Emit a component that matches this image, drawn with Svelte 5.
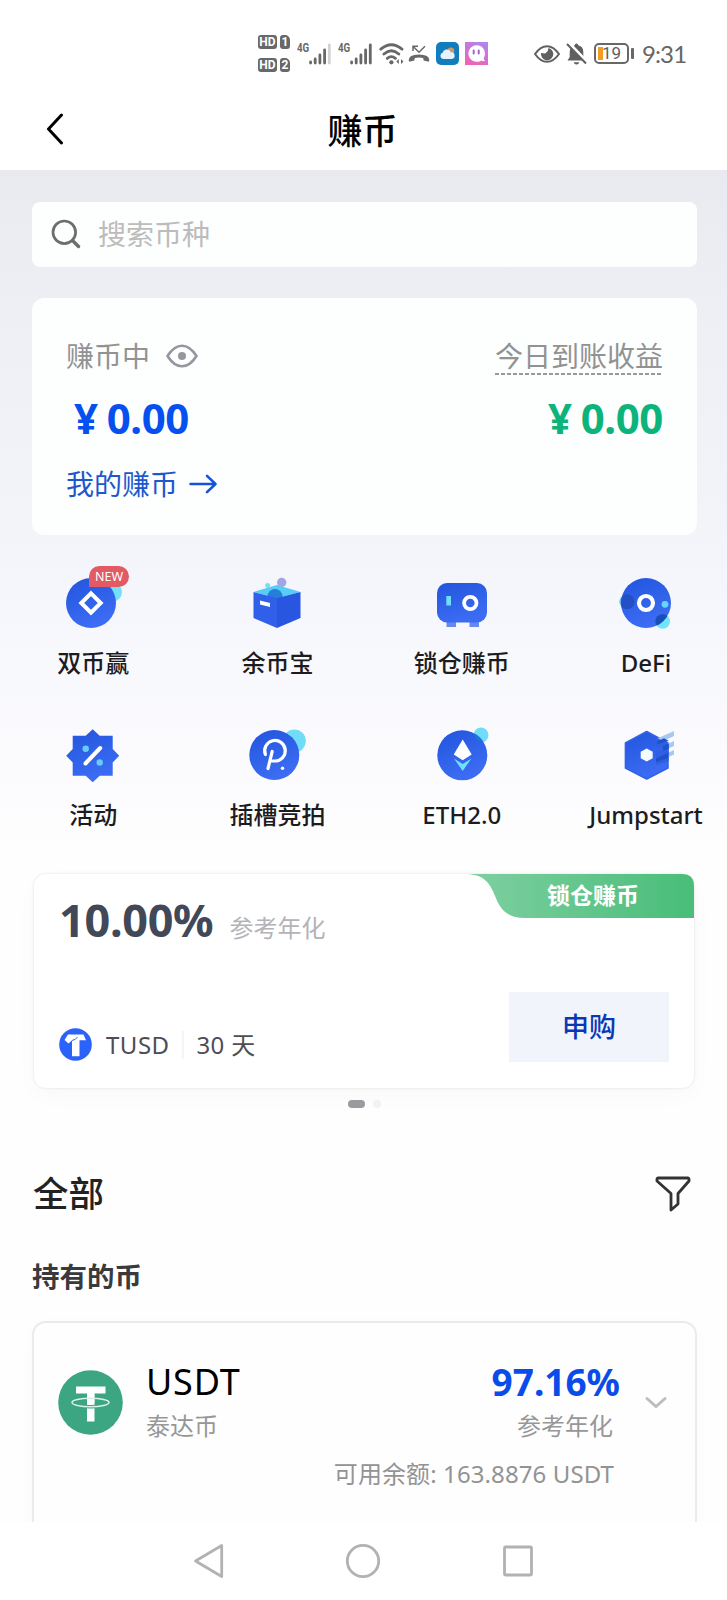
<script lang="ts">
	let keyword: string = $state('');

	const products: { name: string; icon: string; badge?: string }[] = [
		{ name: '双币赢', icon: 'dual', badge: 'NEW' },
		{ name: '余币宝', icon: 'box' },
		{ name: '锁仓赚币', icon: 'safe' },
		{ name: 'DeFi', icon: 'defi' },
		{ name: '活动', icon: 'activity' },
		{ name: '插槽竞拍', icon: 'slot' },
		{ name: 'ETH2.0', icon: 'eth' },
		{ name: 'Jumpstart', icon: 'jump' },
	];
</script>

{#snippet signal(weak: boolean)}
	<span class="net">4G</span>
	<svg class="bars" width="22" height="22" viewBox="0 0 22 22" stroke="#686868" stroke-width="2.8" stroke-linecap="round">
		<path d="M1.6 19v1M6.2 16v4M10.9 12v8M15.6 7v13" />
		<path d="M20.3 2v18" stroke={weak ? '#d2d2d2' : '#686868'} />
	</svg>
{/snippet}

{#snippet hd(n: string)}
	<span class="hd"><b>HD</b><i>{n}</i></span>
{/snippet}

<svg class="defs" width="0" height="0">
	<defs>
		<linearGradient id="blue" x1="0" y1="0" x2="0.4" y2="1">
			<stop offset="0" stop-color="#2354dd" />
			<stop offset="1" stop-color="#3b6cf3" />
		</linearGradient>
	</defs>
</svg>

<div class="app">
	<header>
		<div class="status">
			<div class="hds">
				{@render hd('1')}
				{@render hd('2')}
			</div>
			{@render signal(true)}
			{@render signal(false)}
			<svg class="wifi" width="26" height="22" viewBox="0 0 26 22" fill="none" stroke="#686868" stroke-width="2.8" stroke-linecap="round">
				<path d="M1.8 6.2Q12.4-2.6 23 6.2M4.9 11Q12.4 4.6 19.8 11M8.3 15.3Q12.4 12 16.4 15.3" />
				<circle cx="12.4" cy="19.3" r="2.1" fill="#686868" stroke="none" />
				<path d="M19.800 16v5l-2.500-2.500zM22 16v5l2.500-2.500z" fill="#686868" stroke="none" />
			</svg>
			<svg class="call" width="22" height="18" viewBox="0 0 22 18" fill="none" stroke="#686868">
				<path d="M5 6V1.2h5M5 1.2l6 6 6-6" stroke-width="1.5" />
				<path d="M.7 15.6Q.4 9.6 11 9.6t10.3 6q-.2 1.4-1.6 1l-4-1.2-.6-2.3q-4.1-1-8.2 0l-.6 2.3-4 1.2q-1.4.4-1.6-1z" fill="#686868" stroke="none" />
			</svg>
			<svg class="weather" width="23" height="23" viewBox="0 0 23 23">
				<rect width="23" height="23" rx="5" fill="#127dbd" />
				<circle cx="14.8" cy="9" r="3.5" fill="#c69a72" />
				<path d="M7 17a3.3 3.3 0 0 1-.2-6.4 4.2 4.2 0 0 1 8-.2 3.3 3.3 0 0 1 1 6.600z" fill="#e4f3fc" />
			</svg>
			<svg class="chat" width="23" height="23" viewBox="0 0 23 23">
				<defs>
					<linearGradient id="pink" x1="0.7" y1="0" x2="0.3" y2="1">
						<stop offset="0" stop-color="#b184f0" />
						<stop offset="1" stop-color="#f063b4" />
					</linearGradient>
				</defs>
				<rect width="23" height="23" fill="url(#pink)" />
				<path d="M11.5 3.200a8.300 8.300 0 1 0 4.800 15.200q2 1.400 3.800.300-1.700-1-1.300-3A8.300 8.300 0 0 0 11.500 3.200z" fill="#fff" />
				<path d="M8.700 8.500v3M13.700 8.500v3" stroke="#a263d6" stroke-width="2" stroke-linecap="round" />
			</svg>
			<svg class="watch" width="26" height="18" viewBox="0 0 26 18">
				<path d="M1 9Q6.5 1.2 13 1.2T25 9q-5.500 7.800-12 7.800T1 9z" fill="none" stroke="#606060" stroke-width="2" />
				<path d="M14.500 3a6.200 6.200 0 1 1-7.500 5l4 .500q3-1.500 3.500-5.500z" fill="#606060" />
			</svg>
			<svg class="bell" width="21" height="22" viewBox="0 0 21 22">
				<path d="M10.500.5q1.600 0 1.800 1.700 5 1.300 5 6.800v5l2.200 3.500H1.500L3.700 14V9q0-5.500 5-6.800.2-1.700 1.800-1.700zM7.700 19.200h5.600q-.6 2.300-2.800 2.300t-2.800-2.300z" fill="#606060" />
				<path d="M3.500.5l17 18" stroke="#fff" stroke-width="3" />
				<path d="M1 1l19 19.500" stroke="#606060" stroke-width="2" />
			</svg>
			<div class="battery"><span>19</span></div>
			<span class="time">9:31</span>
		</div>
		<div class="title">
			<svg width="18" height="32" viewBox="0 0 18 32" fill="none" stroke="#000" stroke-width="3" stroke-linecap="round" stroke-linejoin="round">
				<path d="M15.500 2L2.500 16l13 14" />
			</svg>
			<h1>赚币</h1>
		</div>
	</header>

	<main>
		<label class="search">
			<svg width="30" height="30" viewBox="0 0 30 30" fill="none" stroke="#6d6d70" stroke-width="2.700" stroke-linecap="round">
				<circle cx="13.300" cy="13.300" r="11.300" />
				<path d="M21.500 21.500l6 6" stroke-width="3.400" />
			</svg>
			<input placeholder="搜索币种" bind:value={keyword} />
		</label>

		<section class="summary">
			<div class="row">
				<span class="caption">赚币中
					<svg width="32" height="24" viewBox="0 0 32 24">
						<path d="M1.500 12Q8 1.700 16 1.700T30.500 12Q24 22.300 16 22.300T1.500 12z" fill="none" stroke="#9696a0" stroke-width="2.600" />
						<circle cx="16" cy="12" r="4" fill="#9696a0" />
					</svg>
				</span>
				<span class="caption dashed">今日到账收益</span>
			</div>
			<div class="row amounts">
				<strong class="earning">¥ 0.00</strong>
				<strong class="today">¥ 0.00</strong>
			</div>
			<a class="mine" href="#earn">我的赚币
				<svg width="28" height="20" viewBox="0 0 28 20" fill="none" stroke="#1552dc" stroke-width="2.500" stroke-linecap="round" stroke-linejoin="round">
					<path d="M1.500 10h25M18 1.800l8.500 8.200-8.500 8.200" />
				</svg>
			</a>
		</section>

		<nav class="products">
			{#each products as item}
				<div class="product">
					<div class="icon">
						<svg width="72" height="72" viewBox="0 0 72 72">
							{#if item.icon === 'dual'}
								<circle cx="55" cy="25" r="10" fill="#74e0f8" />
								<circle cx="34" cy="36" r="25" fill="url(#blue)" />
								<path d="M34 26.300l9.700 9.700-9.700 9.700-9.700-9.700z" fill="none" stroke="#fff" stroke-width="4" />
							{:else if item.icon === 'box'}
								<circle cx="40.700" cy="15.500" r="4.700" fill="#a5a5e6" />
								<circle cx="26.700" cy="18.500" r="2.500" fill="#74e0f0" />
								<path d="M12.500 25L36 18l23.500 7L36 31z" fill="#55cdf6" />
								<circle cx="34" cy="29.500" r="7.500" fill="#257fd9" />
								<path d="M12.500 25L36 31v30L12.500 51z" fill="#305fe9" />
								<path d="M59.500 25L36 31v30l23.500-10z" fill="#2856e0" />
								<path d="M19 33.500l10 2.500v4l-10-2.500z" fill="#fff" />
							{:else if item.icon === 'safe'}
								<path d="M20.500 53h9.500v7h-9.500zM43.500 53h9.500v7h-9.500z" fill="#6689ef" />
								<rect x="11" y="16" width="50" height="39.500" rx="10" fill="url(#blue)" />
								<rect x="20.300" y="29" width="4.700" height="9.500" fill="#70ddfa" />
								<circle cx="44.300" cy="36" r="6.200" fill="none" stroke="#fff" stroke-width="3.800" />
							{:else if item.icon === 'defi'}
								<circle cx="15.300" cy="34.700" r="6" fill="#65b9ec" />
								<circle cx="52.700" cy="54.500" r="7.300" fill="#70e5fa" />
								<circle cx="36" cy="36" r="25" fill="url(#blue)" />
								<clipPath id="disc"><circle cx="36" cy="36" r="25" /></clipPath>
								<g clip-path="url(#disc)">
									<circle cx="17" cy="34.700" r="7.500" fill="#2350c4" />
									<circle cx="52.700" cy="54.500" r="7.300" fill="#1850b8" />
								</g>
								<circle cx="36" cy="36" r="7" fill="none" stroke="#fff" stroke-width="4.200" />
								<circle cx="55" cy="37.300" r="3.400" fill="#65d6fa" />
							{:else if item.icon === 'activity'}
								<path d="M35.700 10.200l7 6.500h13v13.300l6.500 6.700-6.500 6.800v13.200h-13l-7 6.500-7-6.500h-13V43.500l-6.500-6.800 6.500-6.700V16.700h13z" fill="url(#blue)" />
								<circle cx="28.700" cy="29.700" r="3.200" fill="#68ccf8" />
								<circle cx="42.700" cy="43.500" r="3.200" fill="#68ccf8" />
								<path d="M28.500 44.500L43.200 29" stroke="#fff" stroke-width="4" stroke-linecap="round" />
							{:else if item.icon === 'slot'}
								<circle cx="53.300" cy="22" r="11.500" fill="#70dcf8" />
								<circle cx="33.300" cy="36" r="25" fill="url(#blue)" />
								<g fill="none" stroke="#fff" stroke-width="3.200" stroke-linecap="round">
									<path d="M24.400 35.500A10.300 10.300 0 1 1 33.500 42h-4" />
									<path d="M31.200 32.500L27 49.500" />
								</g>
								<circle cx="41.500" cy="49.300" r="1.700" fill="#fff" />
							{:else if item.icon === 'eth'}
								<circle cx="55" cy="16" r="7.500" fill="#70dcf8" />
								<circle cx="36.300" cy="36.300" r="25" fill="url(#blue)" />
								<path d="M48.500 14.500a25 25 0 0 1 8.500 8A7.500 7.500 0 0 1 48.500 14.500z" fill="#177bcf" />
								<path d="M36.700 20.500l9 15-9 5.800-9-5.800z" fill="#fff" />
								<path d="M28 39.500l8.700 5.500 8.700-5.500-8.700 12.500z" fill="#70e0fa" />
							{:else}
								<path d="M36.700 12.500l21.300 11.500v25L36.700 60 15.400 49V24z" fill="url(#blue)" stroke="#3163e8" stroke-width="1.500" stroke-linejoin="round" />
								<path d="M47 19.500l17-7.500v5l-17 8zM53 27l11-5v5l-11 5zM46 39.500L64 31v4.500l-18 8.500z" fill="#a7c8f2" />
								<path d="M46 18.300l12.700 6.900V35L46 40zM46 44l12.700-6v4L46 46zM47 25.500l-1 6.500 7-1z" fill="#2e60e7" />
								<path d="M47 22.500l7-3.200 4.700 2.400L47 25.500zM53 27l5.700-2.600v5L53 32zM46 39.500l12.700-6v5L46 44z" fill="#1f51c8" />
								<path d="M36.700 29.500l6 3.300v6.500l-6 3.300-6-3.300v-6.500z" fill="#f4fbff" />
							{/if}
						</svg>
						{#if item.badge}
							<span class="badge">{item.badge}</span>
						{/if}
					</div>
					<p>{item.name}</p>
				</div>
			{/each}
		</nav>

		<section class="banner">
			<div class="tag">
				<svg width="229" height="44" viewBox="0 0 229 44">
					<defs>
						<linearGradient id="green">
							<stop offset="0" stop-color="#7fd0a1" />
							<stop offset="1" stop-color="#49bd79" />
						</linearGradient>
					</defs>
					<path d="M0 0h217q12 0 12 12v32H60C42 44 35 35 30 22S19 0 0 0z" fill="url(#green)" />
				</svg>
				<span>锁仓赚币</span>
			</div>
			<div class="rate">
				<strong>10.00%</strong>
				<span>参考年化</span>
			</div>
			<div class="offer">
				<svg width="33" height="33" viewBox="0 0 33 33">
					<circle cx="16.500" cy="16.500" r="16.300" fill="#2a62fa" />
					<path d="M9 6.500h15.500l2.500 5.700h-6.500v16h-7.500V12.200L9.500 15.500 5.500 12z" fill="#fff" />
					<path d="M13 12.500q3.500-.5 5.500-3.500" fill="none" stroke="#2a62fa" stroke-width="1" />
				</svg>
				<span class="coin">TUSD</span>
				<span class="term">30 天</span>
				<button>申购</button>
			</div>
		</section>
		<div class="dots"><i class="on"></i><i></i></div>

		<div class="all">
			<h2>全部</h2>
			<svg width="36" height="36" viewBox="0 0 36 36" fill="none" stroke="#333" stroke-width="2.800" stroke-linejoin="round">
				<path d="M3 2h30q1.300 0 1 3L23 17.500v10.500l-7 6V17.500L2 5Q1.700 2 3 2z" />
			</svg>
		</div>
		<h3>持有的币</h3>

		<section class="holding">
			<div class="asset">
				<svg class="logo" width="65" height="65" viewBox="0 0 65 65">
					<circle cx="32.500" cy="32.500" r="32.300" fill="#3ca581" />
					<path d="M18 16.500h29.500v7H36.500v28h-7.500v-28H18z" fill="#fff" />
					<ellipse cx="32.500" cy="32.500" rx="18.500" ry="4.200" fill="none" stroke="#3ca581" stroke-width="3.500" />
					<path d="M29 25h7.500v7H29z" fill="#fff" />
					<ellipse cx="32.500" cy="32.500" rx="18.500" ry="4.200" fill="none" stroke="#d9f2e9" stroke-width="1.500" />
				</svg>
				<div class="who">
					<b>USDT</b>
					<span>泰达币</span>
				</div>
				<div class="apy">
					<b>97.16%</b>
					<span>参考年化</span>
				</div>
				<svg class="more" width="22" height="13" viewBox="0 0 22 13" fill="none" stroke="#bdbdbd" stroke-width="3" stroke-linecap="round">
					<path d="M2 2.500l9 8 9-8" />
				</svg>
			</div>
			<p class="balance">可用余额: 163.8876 USDT</p>
		</section>
	</main>

	<footer>
		<svg width="340" height="36" viewBox="0 0 340 36" fill="none" stroke="#b2b2b2" stroke-width="2.800" stroke-linejoin="round">
			<path d="M28.700 2.500v31L2.500 18z" />
			<circle cx="170" cy="18" r="15.700" />
			<rect x="311.500" y="4" width="27" height="28" rx="1" />
		</svg>
	</footer>
</div>

<style>
	:global(body) {
		background-color: #fff;
	}

	* {
		box-sizing: border-box;
		margin: 0;
		padding: 0;
	}

	svg {
		display: block;
		flex: none;
	}

	.defs {
		position: absolute;
	}

	.app {
		background-color: #fefefe;
		display: flex;
		flex-direction: column;
		font-family: "Noto Sans", "Noto Sans CJK SC", sans-serif;
		height: 1600px;
		overflow: hidden;
		width: 727px;
	}

	header {
		background-color: #fff;
		flex: none;
		height: 170px;
	}

	/* status bar */
	.status {
		align-items: center;
		display: flex;
		height: 107px;
		padding-left: 258px;
	}

	.hds {
		display: flex;
		flex-direction: column;
		gap: 9px;
		margin-right: 7px;
	}

	.hd {
		display: flex;
		gap: 3px;
	}

	.hd b, .hd i {
		background-color: #686868;
		border-radius: 3px;
		color: #fff;
		font: bold 12px/14px Roboto, sans-serif;
		height: 14px;
		text-align: center;
		width: 19px;
	}

	.hd i {
		border-top-right-radius: 5px;
		width: 10px;
	}

	.net {
		align-self: flex-start;
		color: #686868;
		font: bold 13px/12px Roboto, sans-serif;
		margin-top: 42px;
		transform: scaleX(0.75);
		transform-origin: left;
		width: 12px;
	}

	.bars {
		margin-right: 7px;
	}

	.wifi {
		margin-right: 3px;
	}

	.call {
		margin-right: 6px;
	}

	.weather {
		margin-right: 6px;
	}

	.chat {
		margin-right: 46px;
	}

	.watch {
		margin-right: 6px;
	}

	.bell {
		margin-right: 7px;
	}

	.battery {
		background: linear-gradient(#f29b27, #f29b27) 2px 2px / 5px 13px no-repeat;
		border: 2px solid #686868;
		border-radius: 5px;
		height: 21px;
		position: relative;
		width: 35px;
	}

	.battery::after {
		background-color: #686868;
		border-radius: 1px;
		content: "";
		height: 11px;
		position: absolute;
		right: -7px;
		top: 3px;
		width: 3px;
	}

	.battery span {
		color: #606060;
		display: block;
		font: 17px/17px Roboto, sans-serif;
		padding-left: 6px;
	}

	.time {
		color: #666;
		font-family: Lato, sans-serif;
		font-size: 24px;
		letter-spacing: -0.900px;
		margin-left: 13px;
		padding-bottom: 1px;
	}

	/* title */
	.title {
		align-items: center;
		display: flex;
		height: 44px;
		padding-left: 46px;
	}

	h1 {
		flex: 1;
		font-size: 35px;
		font-weight: 500;
		line-height: 44px;
		margin-right: 66px;
		padding-top: 4px;
		text-align: center;
	}

	main {
		background: linear-gradient(#e9eaf0, #eeeff5 130px, #f2f3f9 320px, #f6f7fc 440px, #fbfbfe 590px, #fefefe 680px);
		display: flex;
		flex: none;
		flex-direction: column;
		height: 1352px;
		overflow: hidden;
		padding: 32px 30px 0 32px;
	}

	.search {
		align-items: center;
		background-color: #fdfefe;
		border-radius: 8px;
		display: flex;
		flex: none;
		gap: 17px;
		height: 65px;
		padding: 0 0 2px 19px;
	}

	.search input {
		background: none;
		border: 0;
		color: #333;
		font-family: inherit;
		font-size: 28px;
		line-height: 40px;
		outline: none;
		width: 400px;
	}

	.search input::placeholder {
		color: #bcbcbc;
	}

	/* summary card */
	.summary {
		background-color: #fdfefe;
		border-radius: 12px;
		flex: none;
		height: 237px;
		margin-top: 31px;
		padding: 39px 34px 0;
	}

	.row {
		display: flex;
		justify-content: space-between;
	}

	.caption {
		align-items: center;
		color: #929292;
		display: flex;
		font-size: 28px;
		gap: 16px;
		height: 38px;
		line-height: 38px;
	}

	.dashed {
		background: repeating-linear-gradient(90deg, #999 0 4px, transparent 4px 6px) bottom / 100% 2px no-repeat;
	}

	.amounts {
		font-size: 42px;
		line-height: 50px;
		margin-top: 18px;
		padding-left: 8px;
	}

	.amounts strong {
		letter-spacing: -0.400px;
		word-spacing: -1.500px;
	}

	.earning {
		color: #0650f0;
	}

	.today {
		color: #0cb47c;
	}

	.mine {
		align-items: center;
		color: #1e57cb;
		display: flex;
		font-size: 28px;
		gap: 11px;
		line-height: 40px;
		margin-top: 21px;
		text-decoration: none;
	}

	/* product entries */
	.products {
		display: grid;
		flex: none;
		grid-auto-rows: 152px;
		grid-template-columns: repeat(4, 184.300px);
		height: 339px;
		margin-left: -31px;
		padding-top: 32px;
		width: 738px;
	}

	.product {
		align-items: center;
		display: flex;
		flex-direction: column;
	}

	.icon {
		position: relative;
	}

	.badge {
		background-color: #e25a63;
		border-radius: 11px 11px 11px 0;
		color: #fff;
		font: 12.500px/21px "Noto Sans", sans-serif;
		height: 21px;
		left: 32px;
		position: absolute;
		text-align: center;
		top: -1px;
		width: 40px;
	}

	.product p {
		color: #1c1c1e;
		font-size: 24px;
		font-weight: 500;
		line-height: 34px;
		margin-top: 7px;
		white-space: nowrap;
	}

	/* recommended offer */
	.banner {
		background-color: #fff;
		border-radius: 12px;
		box-shadow: 0 0 3px rgba(30, 40, 60, 0.12), 0 8px 24px rgba(30, 40, 60, 0.025);
		flex: none;
		height: 214px;
		margin: 0 3px 0 2px;
		padding: 0 25px 0 25px;
		position: relative;
	}

	.tag {
		position: absolute;
		right: 0;
		top: 0;
	}

	.tag span {
		color: #fff;
		font-size: 23px;
		font-weight: bold;
		left: 82px;
		line-height: 43px;
		position: absolute;
		top: 0;
	}

	.rate {
		align-items: baseline;
		display: flex;
		gap: 16px;
		height: 95px;
		padding-top: 15px;
	}

	.rate strong {
		color: #414857;
		font-size: 45px;
		letter-spacing: -0.300px;
		line-height: 62px;
	}

	.rate span {
		color: #b3b3b8;
		font-size: 24px;
	}

	.offer {
		align-items: center;
		color: #4d4d55;
		display: flex;
		font-size: 24px;
		height: 116px;
		line-height: 34px;
	}

	.offer svg, .coin, .term {
		margin-top: 35px;
	}

	.coin {
		border-right: 2px solid #f5f5f7;
		letter-spacing: 0.500px;
		line-height: 28px;
		margin-left: 14px;
		padding-right: 12px;
	}

	.term {
		letter-spacing: 0.300px;
		margin-left: 13px;
	}

	.offer button {
		background-color: #f2f4fc;
		border: 0;
		color: #0a38b4;
		font-family: inherit;
		font-size: 27px;
		font-weight: 500;
		height: 70px;
		margin-left: auto;
		padding-bottom: 4px;
		width: 160px;
	}

	.dots {
		display: flex;
		flex: none;
		gap: 8px;
		height: 9px;
		margin: 12px 0 0 316px;
	}

	.dots i {
		background-color: #f3f3f7;
		border-radius: 4px;
		height: 8px;
		width: 8px;
	}

	.dots .on {
		background-color: #9c9ca0;
		width: 17px;
	}

	/* all coins */
	.all {
		align-items: center;
		display: flex;
		flex: none;
		height: 50px;
		justify-content: space-between;
		margin-top: 60px;
		padding-right: 6px;
	}

	h2 {
		color: #222;
		font-size: 35.500px;
		font-weight: 500;
		line-height: 50px;
		padding: 0 0 3px 1px;
	}

	h3 {
		color: #3a3a3c;
		flex: none;
		font-size: 27.500px;
		font-weight: bold;
		line-height: 40px;
		margin-top: 38px;
	}

	.holding {
		background-color: #fefefe;
		border: 2px solid #ebebeb;
		border-radius: 14px;
		box-shadow: 0 4px 20px rgba(30, 40, 60, 0.020);
		flex: none;
		height: 240px;
		margin-top: 24px;
		padding: 35px 28px 0 24px;
	}

	.asset {
		align-items: center;
		display: flex;
	}

	.who, .apy {
		display: flex;
		flex-direction: column;
	}

	.who {
		margin-left: 23px;
	}

	.who b {
		color: #000;
		font-size: 36px;
		font-weight: 400;
		letter-spacing: 0.800px;
		line-height: 48px;
	}

	.who span, .apy span {
		color: #979797;
		font-size: 24px;
		line-height: 40px;
	}

	.apy {
		margin-left: auto;
		text-align: right;
	}

	.apy b {
		color: #0a4cea;
		font-size: 37px;
		line-height: 48px;
	}

	.apy span {
		padding-right: 7px;
	}

	.more {
		margin-left: 25px;
	}

	.balance {
		color: #939393;
		font-size: 24px;
		letter-spacing: 0.100px;
		line-height: 34px;
		margin: 11px 53px 0 0;
		text-align: right;
	}

	footer {
		align-items: center;
		background-color: #fff;
		display: flex;
		flex: 1;
		padding-left: 193px;
	}
</style>
